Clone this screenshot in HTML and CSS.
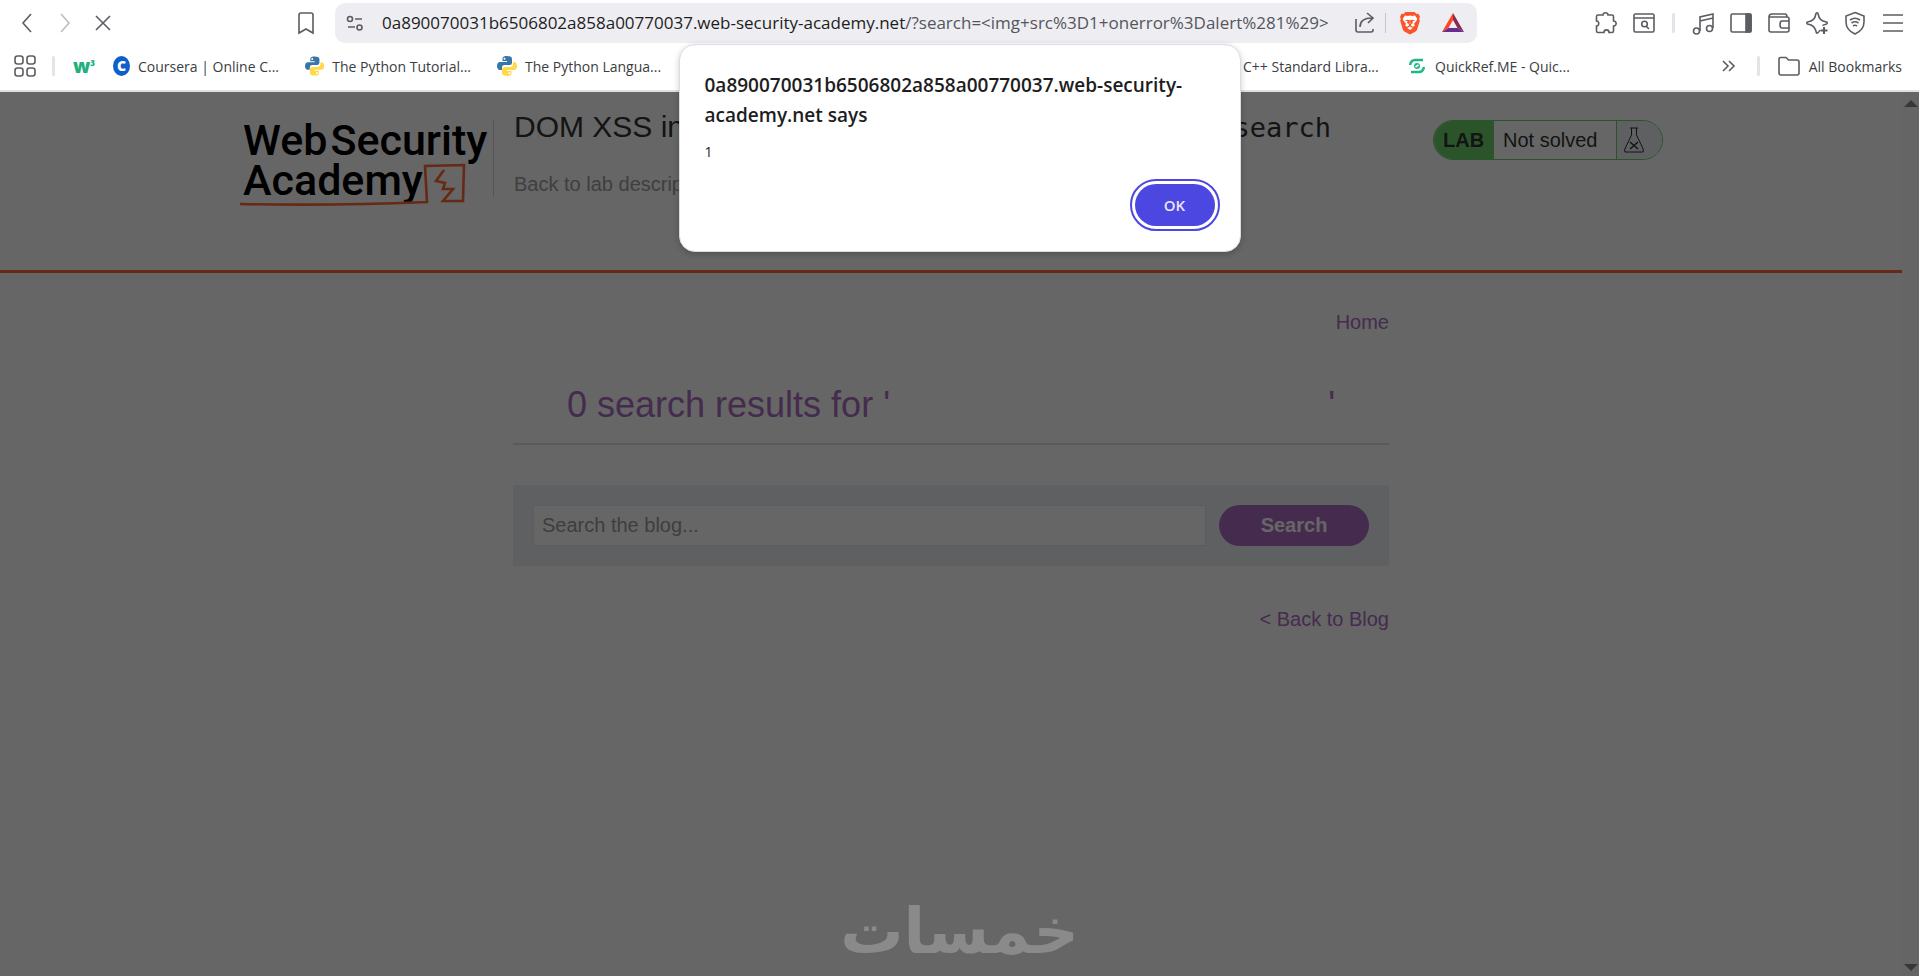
FILE: index.html
```html
<!DOCTYPE html>
<html lang="en">
<head>
    <meta charset="UTF-8">
    <meta name="viewport" content="width=device-width, initial-scale=1.0">
    <title>DOM XSS in innerHTML sink using source location.search</title>
    <link rel="stylesheet" href="styles.css">
</head>
<body>
    <div class="browser">
        <div class="toolbar">
            <div class="nav-buttons">
                <button class="icon-btn" aria-label="Back"><svg viewBox="0 0 24 24"><path d="M16 3L8 12l8 9"/></svg></button>
                <button class="icon-btn faded" aria-label="Forward"><svg viewBox="0 0 24 24"><path d="M8 3l8 9-8 9"/></svg></button>
                <button class="icon-btn" aria-label="Stop"><svg viewBox="0 0 24 24"><path d="M5 5l14 14M19 5L5 19"/></svg></button>
                <button class="icon-btn bookmark-page" aria-label="Bookmark this page"><svg viewBox="0 0 24 24"><path d="M5 4q0-2 2-2h10q2 0 2 2v18l-7-4-7 4z"/></svg></button>
            </div>
            <div class="url-bar">
                <svg class="tune" viewBox="0 0 24 24"><circle cx="7" cy="8" r="2.5"/><path d="M12 8h7M5 16h7"/><circle cx="16.500" cy="16.500" r="2.500"/></svg>
                <span class="url">0a890070031b6506802a858a00770037.web-security-academy.net<span class="url-path">/?search=&lt;img+src%3D1+onerror%3Dalert%281%29&gt;</span></span>
                <button class="icon-btn share" aria-label="Share"><svg viewBox="0 0 24 24"><path d="M3 8v11q0 2 2 2h13q2 0 2-2v-1M7 16c0-6 4-9 12-9M14 2l6 5-5 5"/></svg></button>
                <span class="url-sep"></span>
                <button class="icon-btn brave" aria-label="Brave Shields"><svg viewBox="0 0 24 24"><path fill="#fb542b" stroke="none" d="M7.500 1h9l2 2 2-.3 1.500 3-.8 2 .6 2-2.600 8.500q-.5 1.500-2 2.500L12 23.500l-5.200-2.800q-1.500-1-2-2.500L2.200 9.700l.6-2-.8-2 1.500-3 2 .3z"/><path fill="#fff" stroke="none" d="M7 4.500l3 .6 2-.6 2 .6 3-.6 2.200 3.200-.7 2-2.500 3 .8 2-2 1-1.800-1.200.3-1.500 1.700-1-.6-1.800 3-1-3.200-.5-2.200.6.4 3-.4.6-.4-.6.4-3-2.200-.6-3.200.5 3 1-.6 1.800 1.700 1 .3 1.500L9.200 15.700l-2-1 .8-2-2.500-3-.7-2zM12 15.500l2.800 1.500L12 19l-2.800-2z"/></svg></button>
                <button class="icon-btn" aria-label="Brave Rewards"><svg viewBox="0 0 24 24"><path fill="#ff4724" stroke="none" d="M12 2L1 21l6.500-4L12 9z"/><path fill="#8a2c4e" stroke="none" d="M12 2l11 19-6.500-4L12 9z"/><path fill="#662d91" stroke="none" d="M1 21h22l-6.500-4h-9z"/></svg></button>
            </div>
            <div class="tool-buttons">
                <button class="icon-btn" aria-label="Extensions"><svg viewBox="0 0 24 24"><path d="M4 4h5c-.3-3 5.300-3 5 0h4q1.500 0 1.500 1.500V10c3.500-.3 3.500 5.300 0 5v5q0 1.500-1.500 1.500h-3c0-3.500-5-3.500-5 0H4q-1.500 0-1.500-1.500v-5c3 .2 3-5.200 0-5V5.500Q2.500 4 4 4z"/></svg></button>
                <button class="icon-btn" aria-label="Search in page"><svg viewBox="0 0 24 24"><rect x="2" y="3" width="20" height="18" rx="1.500"/><path d="M2 7h20M14.500 15.500L17 18"/><circle cx="12.500" cy="13" r="2.800"/></svg></button>
                <span class="sep"></span>
                <button class="icon-btn" aria-label="Playlist"><svg viewBox="0 0 24 24"><path d="M9 20V6l13-3v14M9 10l13-3"/><circle cx="5.500" cy="20" r="3"/><circle cx="18.500" cy="17.500" r="3"/></svg></button>
                <button class="icon-btn" aria-label="Side panel"><svg viewBox="0 0 24 24"><rect x="2" y="3" width="20" height="18" rx="1.500"/><path fill="#5b5d62" d="M17 3h4q1 0 1 1v16q0 1-1 1h-4z"/></svg></button>
                <button class="icon-btn" aria-label="Wallet"><svg viewBox="0 0 24 24"><path d="M2 6q0-3 3-3h13q2 0 2 3M2 6h18q2 0 2 2v11q0 2-2 2H4q-2 0-2-2zM22 10h-7q-2 0-2 3.500t2 3.500h7z"/></svg></button>
                <button class="icon-btn" aria-label="Leo AI"><svg viewBox="0 0 24 24"><path d="M15 19c-1 2-2 3.500-3.500 3-1.500-6-3.500-8-9-9-1-.5-1-1.500 0-2 5.500-1 7.500-3 8.500-8.500.5-1 1.500-1 2 0 1 5.500 3 7.500 8.500 8.500 1 .5 1 1.500 0 2-1.500.5-3 1-4 1.500"/><path stroke-width="2" d="M19 16v7M15.500 19.500h7"/></svg></button>
                <button class="icon-btn" aria-label="VPN"><svg viewBox="0 0 24 24"><path d="M12 1.500l9 3.500v6q0 8-9 12-9-4-9-12V5zM7 9q5-3.500 10 0M8.500 12q3.500-2.500 7 0M10 15q2-1.500 4 0"/></svg></button>
                <button class="icon-btn" aria-label="Menu"><svg viewBox="0 0 24 24"><path d="M2 4h20M2 12h20M2 20h20"/></svg></button>
            </div>
        </div>

        <div class="bookmarks">
            <button class="icon-btn apps" aria-label="Apps"><svg viewBox="0 0 24 24"><rect x="2" y="2" width="8" height="8" rx="2.500"/><rect x="14" y="2" width="8" height="8" rx="2.500"/><rect x="2" y="14" width="8" height="8" rx="2.500"/><rect x="14" y="14" width="8" height="8" rx="2.500"/></svg></button>
            <span class="sep"></span>
            <a class="w3" href="#" aria-label="W3Schools">w<sup>3</sup></a>
            <a class="bookmark" href="#"><span class="coursera">C</span><span>Coursera | Online C...</span></a>
            <a class="bookmark" href="#">
                <svg class="favicon" viewBox="0 0 20 20"><path fill="#3776ab" d="M10 0C6 0 5.500 1.500 5.500 3v2H10v1H3C1 6 0 8 0 10s1 4 3 4h2v-2.500Q5 9 7.500 9h5Q15 9 15 6.500V3q0-3-5-3z"/><path fill="#ffd94a" d="M10 20c4 0 4.500-1.500 4.500-3v-2H10v-1h7c2 0 3-2 3-4s-1-4-3-4h-1v2.500Q16 11 13 11H8q-3 0-3 3v3q0 3 5 3z"/><circle cx="7.500" cy="2.700" r="1" fill="#fff"/><circle cx="12.500" cy="17.300" r="1" fill="#fff"/></svg>
                <span>The Python Tutorial...</span>
            </a>
            <a class="bookmark" href="#">
                <svg class="favicon" viewBox="0 0 20 20"><path fill="#3776ab" d="M10 0C6 0 5.500 1.500 5.500 3v2H10v1H3C1 6 0 8 0 10s1 4 3 4h2v-2.500Q5 9 7.500 9h5Q15 9 15 6.500V3q0-3-5-3z"/><path fill="#ffd94a" d="M10 20c4 0 4.500-1.500 4.500-3v-2H10v-1h7c2 0 3-2 3-4s-1-4-3-4h-1v2.500Q16 11 13 11H8q-3 0-3 3v3q0 3 5 3z"/><circle cx="7.500" cy="2.700" r="1" fill="#fff"/><circle cx="12.500" cy="17.300" r="1" fill="#fff"/></svg>
                <span>The Python Langua...</span>
            </a>
            <a class="bookmark after-dialog" href="#"><span>C++ Standard Libra...</span></a>
            <a class="bookmark" href="#">
                <svg class="favicon" viewBox="0 0 20 20"><g fill="none" stroke="#1fb881" stroke-width="2.500"><path d="M3 9q1-5 5-5h8M17 11q-1 5-5 5H4"/></g><circle cx="10" cy="10" r="3" fill="#1fb881"/><path d="M8.500 11l3-2" stroke="#fff"/></svg>
                <span>QuickRef.ME - Quic...</span>
            </a>
            <button class="icon-btn more" aria-label="More bookmarks"><svg viewBox="0 0 24 24"><path d="M7 7l5 5-5 5M13 7l5 5-5 5"/></svg></button>
            <span class="sep"></span>
            <a class="all-bookmarks" href="#"><svg viewBox="0 0 24 24"><path d="M2 5q0-1.500 1.500-1.500H9L11.500 6H20q2 0 2 2v11q0 2-2 2H4q-2 0-2-2z"/></svg><span>All Bookmarks</span></a>
        </div>
    </div>

    <div class="viewport">
        <div class="page">
            <header class="lab-header">
                <div class="lab-header-inner">
                    <a class="logo" href="#">
                        <span class="logo-line"><span>Web</span><span>Security</span></span>
                        <span class="logo-line">Academy</span>
                        <svg class="logo-mark" viewBox="0 0 230 90"><path d="M1 84q90 2 187-2L186 46l39-1-1 36h-20l10-12h-10l2-6-9-2 8-11"/></svg>
                    </a>
                    <div class="lab-title">
                        <h2>DOM XSS in <code>innerHTML</code> sink using source <code>location.search</code></h2>
                        <a href="#">Back to lab description &raquo;</a>
                    </div>
                    <div class="lab-status">
                        <span class="lab-tag">LAB</span>
                        <span class="lab-text">Not solved</span>
                        <span class="lab-flask"><svg viewBox="0 0 20 26"><path d="M6 1h8M7.500 1v7L.8 22v3h18.400v-3L12.500 8V1"/><path class="cross" d="M6 15l8 7M14 15l-8 7"/></svg></span>
                    </div>
                </div>
            </header>

            <main class="blog">
                <nav><a href="#">Home</a></nav>
                <h1><span>0 search results for '</span><span>'</span></h1>
                <form class="search">
                    <input type="text" name="search" placeholder="Search the blog..." aria-label="Search the blog">
                    <button type="button">Search</button>
                </form>
                <div class="back"><a href="#">&lt; Back to Blog</a></div>
            </main>
        </div>
        <div class="scrollbar"><span class="arrow-up"></span><span class="arrow-down"></span></div>
        <div class="overlay"></div>
        <div class="watermark" lang="ar" dir="rtl">خمسات</div>
    </div>

    <div class="alert" role="alertdialog" aria-labelledby="alertTitle">
        <h3 id="alertTitle">0a890070031b6506802a858a00770037.web-security-academy.net says</h3>
        <p>1</p>
        <button>OK</button>
    </div>
</body>
</html>
```
FILE: styles.css
```css
* {
    box-sizing: border-box;
}

body {
    margin: 0;
    min-height: 100vh;
    display: flex;
    flex-direction: column;
    position: relative;
    background: #fff;
    font-family: "Liberation Sans", Arial, sans-serif;
}

a {
    text-decoration: none;
}

/* Browser bars */
.browser {
    background: #fff;
    border-bottom: 2px solid #dfdfe6;
    font-family: "Open Sans", sans-serif;
    color: #3b3d42;
}

.toolbar {
    display: grid;
    grid-template-columns: 335px minmax(0, 1fr) 442px;
    align-items: center;
    height: 46px;
}

.nav-buttons,
.tool-buttons {
    display: flex;
    align-items: center;
    gap: 14px;
    padding-left: 15px;
}

.tool-buttons {
    justify-content: flex-end;
    padding-right: 14px;
}

.icon-btn {
    width: 24px;
    height: 24px;
    padding: 0;
    border: none;
    background: none;
    flex-shrink: 0;
}

.browser svg {
    display: block;
    width: 24px;
    height: 24px;
    fill: none;
    stroke: #5b5d62;
    stroke-width: 1.6;
}

.faded {
    opacity: 0.4;
}

.bookmark-page {
    margin-left: auto;
    margin-right: 17px;
}

.sep {
    width: 3px;
    height: 20px;
    border-radius: 2px;
    background: #e3e3ea;
    flex-shrink: 0;
}

.tool-buttons .sep {
    margin: 0 2px;
}

.url-bar {
    display: flex;
    align-items: center;
    height: 40px;
    padding: 0 12px 0 8px;
    border-radius: 10px;
    background: #ededf2;
}

.url {
    margin-left: 15px;
    padding-bottom: 2px;
    flex: 1;
    font-size: 17px;
    white-space: nowrap;
    overflow: hidden;
    color: #1d1d22;
}

.url-path {
    color: #55565c;
}

.url-sep {
    width: 1px;
    height: 20px;
    margin: 0 12px 0 8px;
    background: #c4c4cc;
}

.brave {
    margin-right: 19px;
}

.bookmarks {
    display: flex;
    align-items: center;
    height: 44px;
    padding: 0 17px 4px 13px;
    font-size: 14px;
}

.bookmarks a {
    color: #3b3d42;
}

.apps {
    margin-right: 15px;
}

.w3 {
    width: 22px;
    margin: 0 18px;
    font-size: 19px;
    line-height: 20px;
    font-weight: 800;
    white-space: nowrap;
}

.bookmarks .w3 {
    color: #22b07d;
}

.w3 sup {
    font-size: 8px;
    line-height: 1px;
}

.bookmark {
    display: flex;
    align-items: center;
    gap: 8px;
    width: 166px;
    margin-right: 26px;
    white-space: nowrap;
}

.browser .favicon {
    width: 20px;
    height: 20px;
    stroke: none;
}

.coursera {
    width: 20px;
    height: 20px;
    border-radius: 50%;
    background: #0f5fcb;
    color: #fff;
    font-weight: 800;
    line-height: 20px;
    text-align: center;
}

.after-dialog {
    width: 138px;
    margin-left: 554px;
}

.more {
    margin-left: auto;
    margin-right: 17px;
}

.all-bookmarks {
    display: flex;
    align-items: center;
    gap: 8px;
    margin-left: 17px;
}

/* Page */
.viewport {
    flex: 1;
    display: flex;
    position: relative;
    background: #fff;
}

.page {
    flex: 1;
}

.overlay {
    position: absolute;
    inset: 0;
    background: rgba(0, 0, 0, 0.6);
}

.scrollbar {
    width: 17px;
    display: flex;
    flex-direction: column;
    align-items: center;
    justify-content: space-between;
    padding: 8px 0 5px;
    background: #fcfcfc;
}

.arrow-up,
.arrow-down {
    border-left: 7px solid transparent;
    border-right: 7px solid transparent;
}

.arrow-up {
    border-bottom: 7px solid #8b8b8b;
}

.arrow-down {
    border-top: 7px solid #8b8b8b;
}

.lab-header {
    border-bottom: 3px solid #ff6633;
}

.lab-header-inner {
    display: flex;
    align-items: flex-start;
    max-width: 1424px;
    height: 178px;
    margin: 0 auto;
    padding-top: 15px;
}

.logo {
    position: relative;
    width: 255px;
    height: 77px;
    margin-top: 13px;
    padding-left: 4px;
    border-right: 1px solid #d5d5d8;
    color: #000;
    font-family: Roboto, sans-serif;
    font-size: 43px;
    font-weight: 500;
    line-height: 40px;
    flex-shrink: 0;
}

.logo-line {
    display: flex;
    gap: 3px;
}

.logo-mark {
    position: absolute;
    left: 0;
    top: 0;
    width: 230px;
    height: 90px;
    fill: none;
    stroke: #ff6633;
    stroke-width: 2.6;
}

.lab-title {
    flex: 1;
    padding-left: 20px;
}

.lab-title h2 {
    margin: 0 0 24px;
    font-size: 30px;
    font-weight: 400;
    line-height: 40px;
    white-space: nowrap;
    color: #333332;
}

.lab-title code {
    font-family: "DejaVu Sans Mono", monospace;
    font-size: 27px;
}

.lab-title a {
    font-size: 20px;
    line-height: 24px;
    color: #9c9ea3;
}

.lab-status {
    display: flex;
    width: 230px;
    height: 40px;
    margin-top: 13px;
    border: 1px solid #6cd26c;
    border-radius: 20px;
    overflow: hidden;
    font-size: 20px;
    line-height: 38px;
    color: #333332;
}

.lab-tag {
    width: 60px;
    padding-left: 9px;
    background: #6cd26c;
    font-weight: 700;
}

.lab-text {
    flex: 1;
    padding-left: 9px;
}

.lab-flask {
    width: 46px;
    padding: 6px 0 0 7px;
    border-left: 1px solid #6cd26c;
    background: #ebeff5;
}

.lab-flask svg {
    display: block;
    width: 20px;
    height: 26px;
    fill: none;
    stroke: #333332;
}

.lab-flask .cross {
    stroke-width: 1.5;
}

.blog {
    max-width: 876px;
    margin: 0 auto;
    padding-top: 37px;
    font-size: 20px;
    line-height: 24px;
}

.blog a {
    color: #ad6ec2;
}

.blog nav,
.back {
    text-align: right;
}

.blog h1 {
    display: flex;
    justify-content: space-between;
    margin: 51px 0 40px;
    padding: 0 54px 18px;
    border-bottom: 2px solid #e2e2e2;
    color: #ad6ec2;
    font-size: 36px;
    font-weight: 400;
    line-height: 40px;
}

.search {
    display: flex;
    gap: 13px;
    padding: 20px;
    margin-bottom: 41px;
    background: #ecf0f5;
}

.search input {
    flex: 1;
    min-width: 0;
    height: 41px;
    padding: 0 8px;
    border: 1px solid #e2e5ea;
    background: #fff;
    font-family: inherit;
    font-size: 20px;
}

.search input::placeholder {
    color: #9c9c9c;
}

.search button {
    width: 150px;
    border: none;
    border-radius: 21px;
    background: #ad6ec2;
    color: #fff;
    font-family: inherit;
    font-size: 20px;
    font-weight: 700;
}

.watermark {
    position: absolute;
    left: 0;
    right: 0;
    bottom: 12px;
    text-align: center;
    font-family: "DejaVu Sans", sans-serif;
    font-size: 63px;
    font-weight: 700;
    line-height: 64px;
    color: #8a8a8a;
}

/* Alert box */
.alert {
    position: absolute;
    top: 44px;
    left: 0;
    right: 0;
    width: 562px;
    margin: 0 auto;
    padding: 25px 25px 25px;
    border: 1px solid #dcdce4;
    border-radius: 16px;
    background: #fff;
    box-shadow: 0 2px 6px rgba(0, 0, 0, 0.2);
    font-family: "Open Sans", sans-serif;
    color: #1d1d22;
}

.alert h3 {
    margin: 0;
    font-size: 19px;
    font-weight: 600;
    line-height: 30px;
}

.alert p {
    margin: 12px 0 22px;
    font-size: 14px;
    line-height: 20px;
}

.alert button {
    display: block;
    width: 80px;
    height: 42px;
    margin: 0 0 0 auto;
    border: none;
    border-radius: 21px;
    outline: 2px solid #4c47e0;
    outline-offset: 3px;
    background: #4c47e0;
    color: #e8e8f5;
    font-family: inherit;
    font-size: 15px;
    font-weight: 600;
}
```
